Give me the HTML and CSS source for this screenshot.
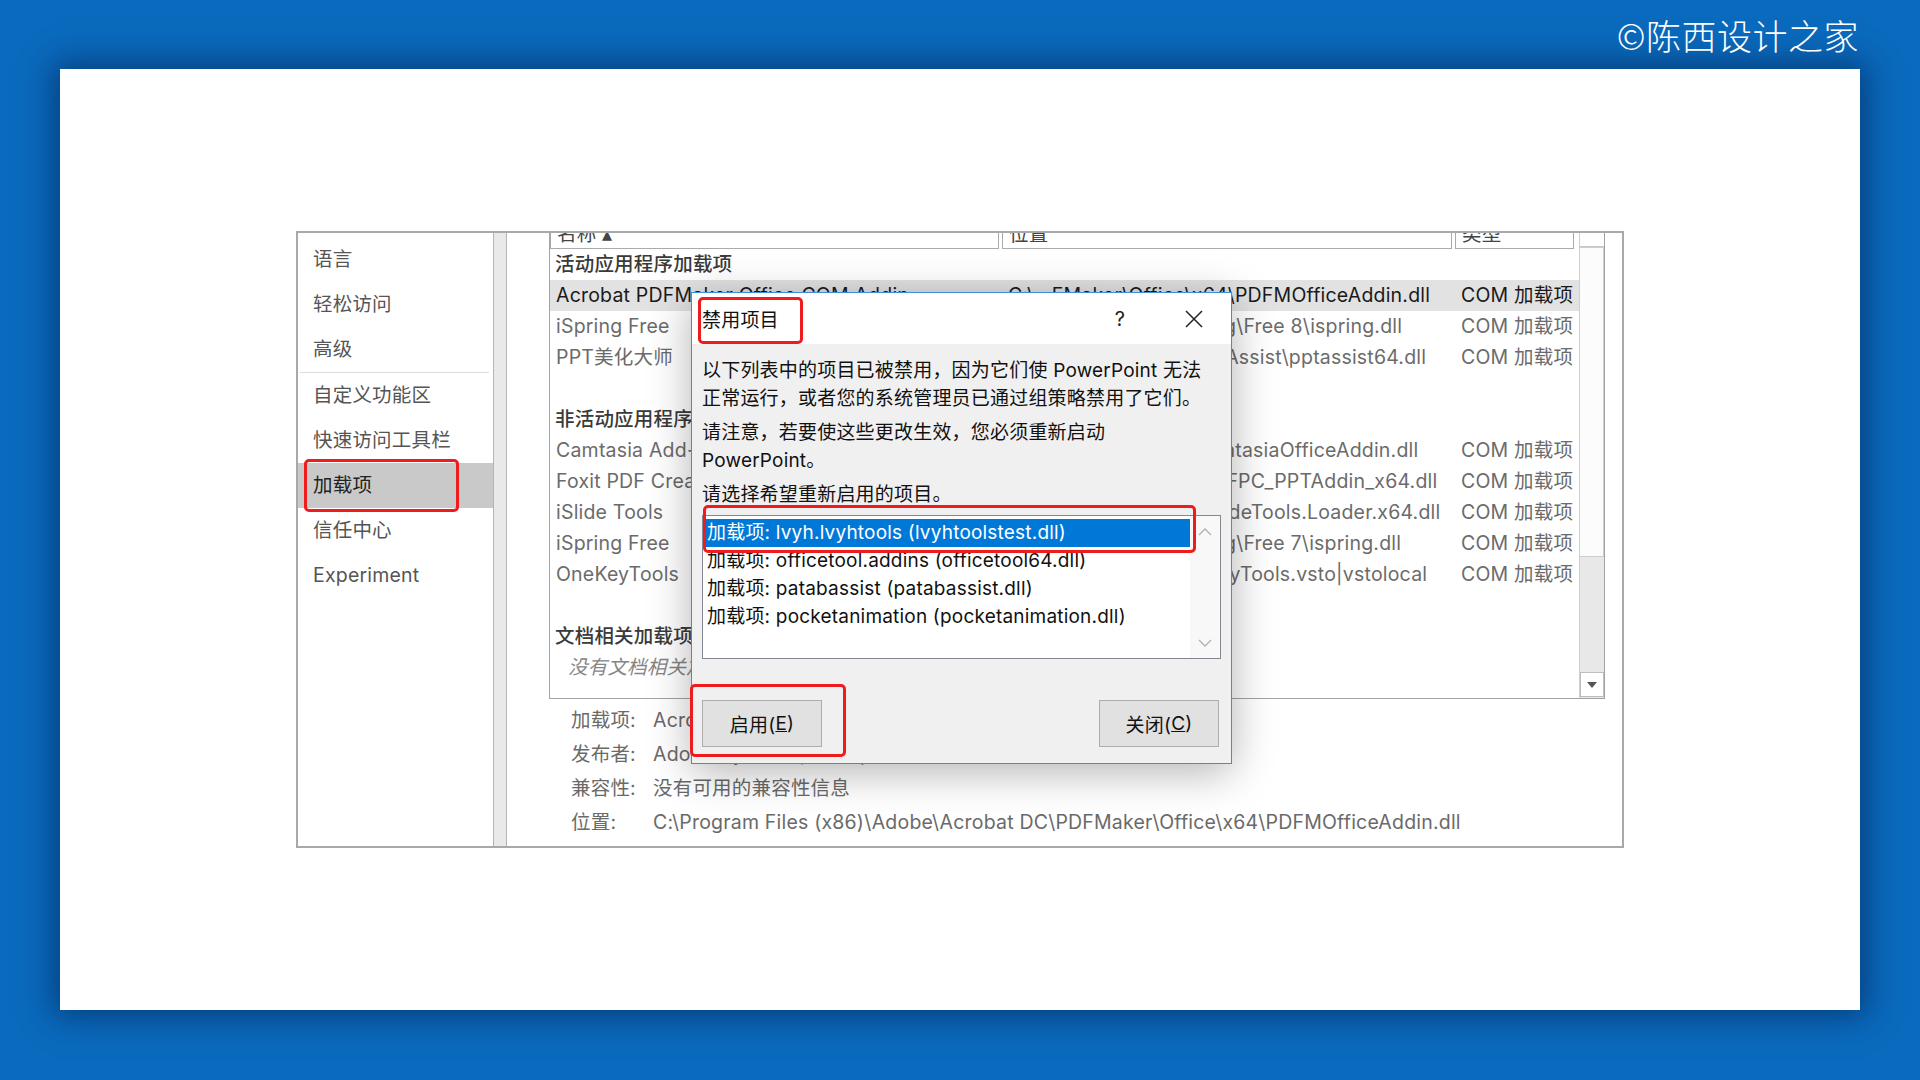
FILE: index.html
```html
<!DOCTYPE html>
<html lang="zh-CN">
<head>
    <meta charset="UTF-8">
    <meta name="viewport" content="width=device-width, initial-scale=1.0">
    <title>加载项 - 禁用项目</title>
    <link rel="stylesheet" href="styles.css">
</head>
<body>

    <!-- Watermark -->
    <div class="top-bar">
        <span class="watermark">©陈西设计之家</span>
    </div>

    <!-- Slide -->
    <div class="slide">
        <div class="options-window">

            <!-- Left navigation -->
            <ul class="nav">
                <li>语言</li>
                <li>轻松访问</li>
                <li>高级</li>
                <li class="nav-sep"></li>
                <li>自定义功能区</li>
                <li>快速访问工具栏</li>
                <li class="active">加载项<span class="mark mark-nav"></span></li>
                <li>信任中心</li>
                <li>Experiment</li>
            </ul>
            <div class="splitter"></div>

            <!-- Add-in list -->
            <div class="main">
                <div class="addin-table">
                    <div class="list">
                        <div class="row head">
                            <div class="cell">名称 ▴</div>
                            <div class="cell">位置</div>
                            <div class="cell">类型</div>
                        </div>
                        <div class="row group">活动应用程序加载项</div>
                        <div class="row selected">
                            <div class="cell">Acrobat PDFMaker Office COM Addin</div>
                            <div class="cell">C:\...FMaker\Office\x64\PDFMOfficeAddin.dll</div>
                            <div class="cell">COM 加载项</div>
                        </div>
                        <div class="row">
                            <div class="cell">iSpring Free</div>
                            <div class="cell">D:\Program Files\iSpring\Free 8\ispring.dll</div>
                            <div class="cell">COM 加载项</div>
                        </div>
                        <div class="row">
                            <div class="cell">PPT美化大师</div>
                            <div class="cell">D:\Program Files\PPTv\Assist\pptassist64.dll</div>
                            <div class="cell">COM 加载项</div>
                        </div>
                        <div class="row"></div>
                        <div class="row group">非活动应用程序加载项</div>
                        <div class="row">
                            <div class="cell">Camtasia Add-in</div>
                            <div class="cell">C:\...\TechSmith\v9\CamtasiaOfficeAddin.dll</div>
                            <div class="cell">COM 加载项</div>
                        </div>
                        <div class="row">
                            <div class="cell">Foxit PDF Creator COM Add-in</div>
                            <div class="cell">C:\...\Foxit Reader\x64\FPC_PPTAddin_x64.dll</div>
                            <div class="cell">COM 加载项</div>
                        </div>
                        <div class="row">
                            <div class="cell">iSlide Tools</div>
                            <div class="cell">C:\...\iSlide Tools\lib\iSlideTools.Loader.x64.dll</div>
                            <div class="cell">COM 加载项</div>
                        </div>
                        <div class="row">
                            <div class="cell">iSpring Free</div>
                            <div class="cell">D:\Program Files\iSpring\Free 7\ispring.dll</div>
                            <div class="cell">COM 加载项</div>
                        </div>
                        <div class="row">
                            <div class="cell">OneKeyTools</div>
                            <div class="cell">file:///D:/OKTool/OneKeyTools.vsto|vstolocal</div>
                            <div class="cell">COM 加载项</div>
                        </div>
                        <div class="row"></div>
                        <div class="row group">文档相关加载项</div>
                        <div class="row note">没有文档相关加载项</div>
                    </div>
                    <div class="vscroll">
                        <div class="sb-up"></div>
                        <div class="sb-thumb"></div>
                        <div class="sb-track"></div>
                        <div class="sb-down"><span class="tri-down"></span></div>
                    </div>
                </div>

                <div class="details">
                    <div class="detail"><span class="label">加载项:</span><span>Acrobat PDFMaker Office COM Addin</span></div>
                    <div class="detail"><span class="label">发布者:</span><span>Adobe Systems, Incorporated</span></div>
                    <div class="detail"><span class="label">兼容性:</span><span>没有可用的兼容性信息</span></div>
                    <div class="detail"><span class="label">位置:</span><span>C:\Program Files (x86)\Adobe\Acrobat DC\PDFMaker\Office\x64\PDFMOfficeAddin.dll</span></div>
                </div>
            </div>

            <!-- Disabled items dialog -->
            <div class="dialog">
                <div class="title-bar">
                    <span class="title">禁用项目</span>
                    <span class="mark mark-title"></span>
                    <span class="tb-btn">?</span>
                    <span class="tb-btn">
                        <svg width="18" height="18" viewBox="0 0 18 18"><path d="M1 1 L17 17 M17 1 L1 17" stroke="#222" stroke-width="1.5" fill="none"/></svg>
                    </span>
                </div>
                <div class="dialog-body">
                    <p>以下列表中的项目已被禁用，因为它们使 PowerPoint 无法<br>正常运行，或者您的系统管理员已通过组策略禁用了它们。</p>
                    <p>请注意，若要使这些更改生效，您必须重新启动<br>PowerPoint。</p>
                    <p>请选择希望重新启用的项目。</p>
                    <div class="listbox">
                        <div class="items">
                            <div class="item selected">加载项: lvyh.lvyhtools (lvyhtoolstest.dll)</div>
                            <div class="item">加载项: officetool.addins (officetool64.dll)</div>
                            <div class="item">加载项: patabassist (patabassist.dll)</div>
                            <div class="item">加载项: pocketanimation (pocketanimation.dll)</div>
                        </div>
                        <div class="lb-scroll">
                            <svg width="14" height="8" viewBox="0 0 14 8"><path d="M1 7 L7 1 L13 7" stroke="#b0b0b0" stroke-width="1.3" fill="none"/></svg>
                            <svg width="14" height="8" viewBox="0 0 14 8"><path d="M1 1 L7 7 L13 1" stroke="#b0b0b0" stroke-width="1.3" fill="none"/></svg>
                        </div>
                        <span class="mark mark-list"></span>
                    </div>
                    <div class="buttons">
                        <div class="btn">启用(<u>E</u>)<span class="mark mark-btn"></span></div>
                        <div class="btn">关闭(<u>C</u>)</div>
                    </div>
                </div>
            </div>

        </div>
    </div>

</body>
</html>
```

FILE: styles.css
```css
/* General Styles */
body {
    margin: 0;
    background-color: #0a6abd;
    font-family: Inter, "Noto Sans CJK SC", sans-serif;
    font-size: 19.5px;
    letter-spacing: 0.2px;
    height: 1080px;
    overflow: hidden;
}

/* Watermark */
.top-bar {
    height: 69px;
    display: flex;
    justify-content: flex-end;
    align-items: center;
    padding-right: 61px;
}

.watermark {
    color: #fff;
    font-family: "Noto Sans CJK SC", sans-serif;
    font-weight: 300;
    font-size: 35px;
    letter-spacing: 0.5px;
}

/* Slide */
.slide {
    margin: 0 60px;
    height: 941px;
    background-color: #fff;
    box-shadow: 0 0 30px 6px rgba(0, 25, 70, 0.55);
    display: flex;
    align-items: center;
    justify-content: center;
}

/* Options window */
.options-window {
    position: relative;
    width: 1328px;
    height: 617px;
    box-sizing: border-box;
    border: 2px solid #a9a9a9;
    background-color: #fff;
    display: flex;
}

.nav {
    list-style: none;
    margin: 0;
    padding: 4px 0 0;
    width: 195px;
}

.nav li {
    height: 45px;
    line-height: 45px;
    padding-left: 15px;
    color: #555;
}

.nav li.nav-sep {
    height: 1px;
    margin: 0 4px 0 2px;
    padding: 0;
    background-color: #dcdcdc;
}

.nav li.active {
    position: relative;
    background-color: #c9c9c9;
    color: #222;
}

.splitter {
    width: 14px;
    box-sizing: border-box;
    border-left: 1px solid #b5b5b5;
    border-right: 1px solid #b5b5b5;
    background-color: #e9e9e9;
}

.main {
    flex: 1;
    min-width: 0;
    overflow: hidden;
    padding: 0 17px 0 42px;
}

/* Add-in table */
.addin-table {
    margin-top: -12px;
    height: 478px;
    box-sizing: border-box;
    border: 1px solid #a3a3a3;
    display: flex;
}

.list {
    flex: 1;
    min-width: 0;
}

.row {
    display: grid;
    grid-template-columns: 452px 453px 122px;
    height: 31px;
    line-height: 31px;
    color: #6b6b6b;
    white-space: nowrap;
}

.cell {
    padding-left: 6px;
    overflow: hidden;
}

.row.head {
    height: 27px;
    line-height: 25px;
    color: #444;
}

.row.head .cell {
    border: 1px solid #ababab;
    border-top: none;
    margin-right: 3px;
}

.row.group {
    display: block;
    padding-left: 5px;
    color: #3a3a3a;
    font-weight: 500;
}

.row.selected {
    background-color: #e2e2e2;
    color: #1a1a1a;
}

.row.note {
    display: block;
    padding-left: 18px;
    font-style: italic;
    color: #868686;
}

.vscroll {
    width: 24px;
    display: flex;
    flex-direction: column;
    background-color: #e8e8e8;
    border-left: 1px solid #cfcfcf;
}

.sb-up {
    height: 24px;
    background-color: #fff;
    border-bottom: 1px solid #c8c8c8;
}

.sb-thumb {
    height: 308px;
    background-color: #fcfcfc;
    border: 1px solid #cdcdcd;
    border-left: none;
}

.sb-track {
    flex: 1;
}

.sb-down {
    height: 25px;
    margin-bottom: 1px;
    box-sizing: border-box;
    background-color: #fff;
    border: 1px solid #bdbdbd;
    display: flex;
    align-items: center;
    justify-content: center;
}

.tri-down {
    width: 0;
    height: 0;
    border-left: 5px solid transparent;
    border-right: 5px solid transparent;
    border-top: 6px solid #555;
}

/* Details under the table */
.details {
    padding: 4px 0 0 22px;
}

.detail {
    display: flex;
    height: 34px;
    line-height: 34px;
    color: #6a6a6a;
    white-space: nowrap;
}

.detail .label {
    width: 82px;
    flex-shrink: 0;
}

/* Dialog */
.dialog {
    position: absolute;
    left: 393px;
    top: 59px;
    width: 541px;
    height: 472px;
    box-sizing: border-box;
    border: 1px solid #3d8ee0;
    background-color: #f0f0f0;
    box-shadow: 0 8px 40px rgba(0, 0, 0, 0.3);
    font-size: 19px;
    color: #111;
}

.title-bar {
    height: 51px;
    background-color: #fff;
    display: flex;
    align-items: center;
    gap: 28px;
    padding: 0 14px 0 10px;
}

.title {
    flex: 1;
}

.tb-btn {
    width: 46px;
    display: flex;
    justify-content: center;
    align-items: center;
    font-size: 20px;
    color: #222;
}

.dialog-body {
    padding: 13px 10px 16px 10px;
}

.dialog-body p {
    margin: 0 0 6px;
    line-height: 28px;
}

.listbox {
    position: relative;
    height: 144px;
    box-sizing: border-box;
    border: 1px solid #828790;
    background-color: #fff;
    display: flex;
}

.items {
    flex: 1;
    padding-top: 3px;
}

.item {
    height: 28px;
    line-height: 28px;
    padding-left: 4px;
    white-space: nowrap;
}

.item.selected {
    background-color: #0078d7;
    color: #fff;
}

.lb-scroll {
    width: 30px;
    background-color: #f8f8f8;
    display: flex;
    flex-direction: column;
    justify-content: space-between;
    align-items: center;
    padding: 12px 0 11px;
    box-sizing: border-box;
}

.buttons {
    display: flex;
    justify-content: space-between;
    margin-top: 41px;
    padding-right: 2px;
}

.btn {
    position: relative;
    width: 120px;
    height: 47px;
    box-sizing: border-box;
    border: 1px solid #adadad;
    background-color: #e1e1e1;
    display: flex;
    align-items: center;
    justify-content: center;
}

/* Red annotation boxes */
.mark {
    position: absolute;
    box-sizing: border-box;
    border: 3px solid #ee1c1c;
    border-radius: 5px;
}

.mark-nav {
    left: 6px;
    top: -4px;
    width: 155px;
    height: 53px;
}

.mark-title {
    left: 6px;
    top: 4px;
    width: 105px;
    height: 47px;
}

.mark-list {
    left: 0;
    top: -11px;
    width: 493px;
    height: 48px;
}

.mark-btn {
    left: -13px;
    top: -17px;
    width: 156px;
    height: 73px;
}
```
